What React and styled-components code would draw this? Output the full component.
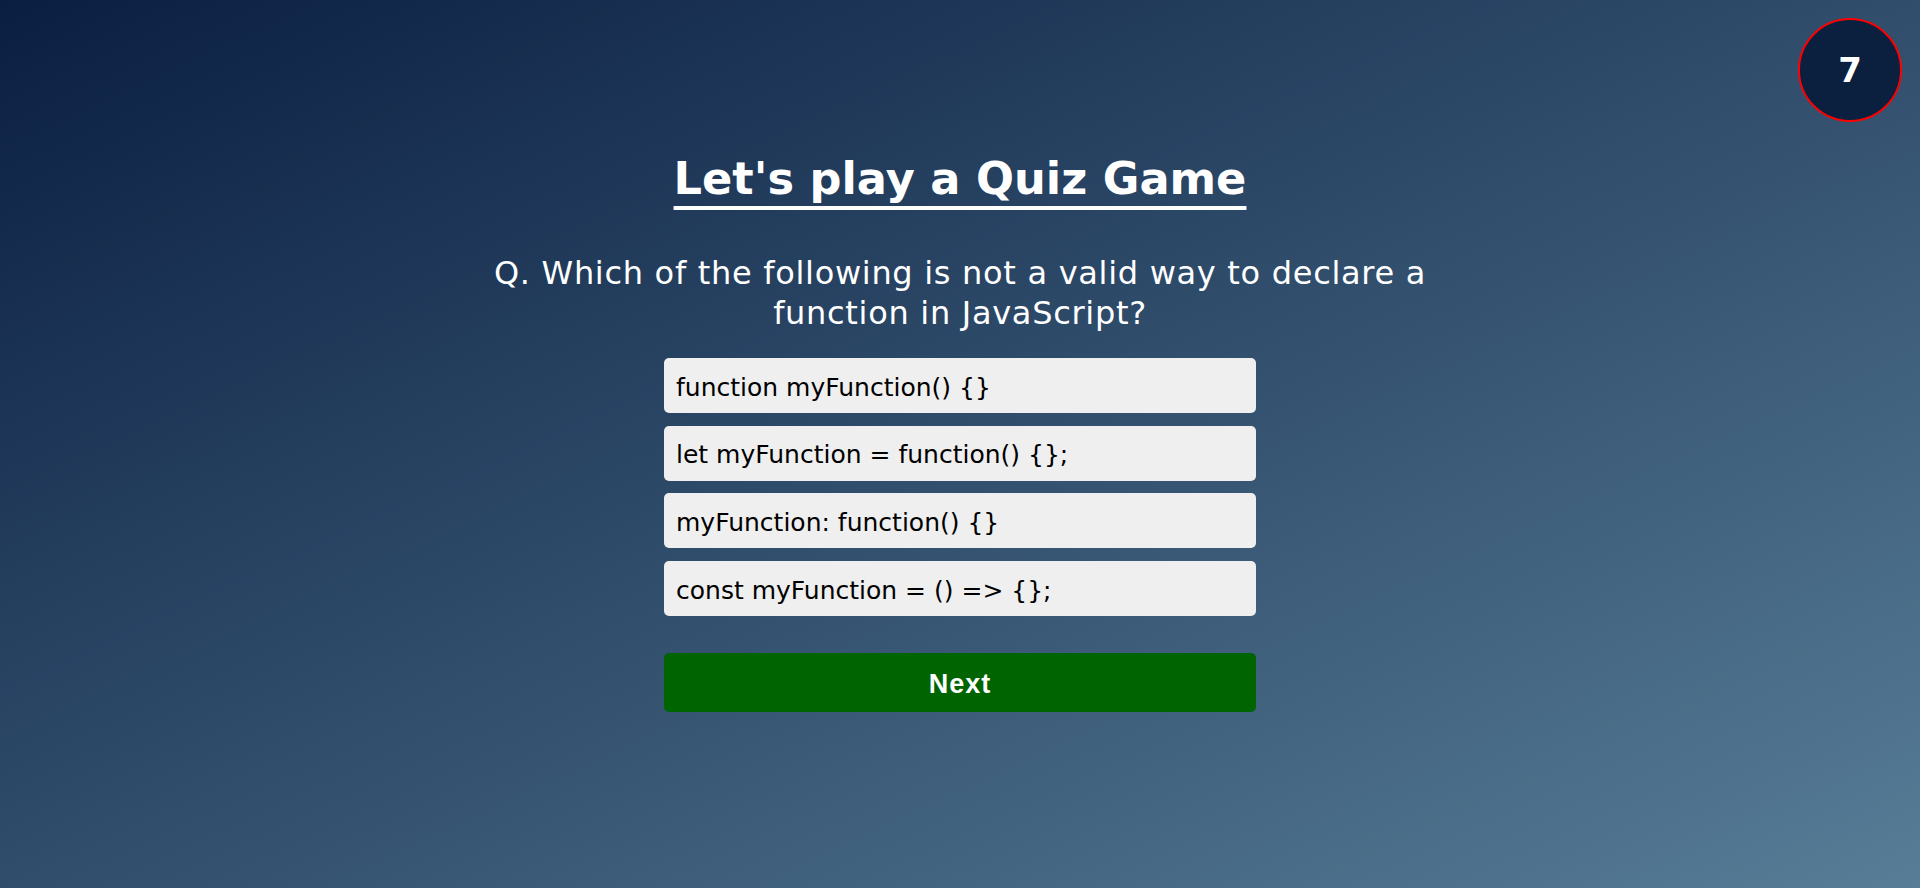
import React from 'react';
import styled, { createGlobalStyle } from 'styled-components';

const GlobalStyle = createGlobalStyle`
    html, body {
        margin: 0;
        padding: 0;
    }
    body {
        font-family: "DejaVu Sans", Verdana, sans-serif;
        background: linear-gradient(to bottom right, #0a1e41, #577d97);
        min-height: 888px;
        overflow: hidden;
    }
`;

const Page = styled.div`
    position: relative;
    height: 888px;
    display: flex;
    flex-direction: column;
    align-items: center;
    padding-top: 153px;
    box-sizing: border-box;
`;

const Timer = styled.div`
    position: absolute;
    top: 18px;
    right: 18px;
    width: 100px;
    height: 100px;
    border: 2px solid #f00;
    border-radius: 50%;
    background: #0b1f3f;
    color: #fff;
    display: flex;
    align-items: center;
    justify-content: center;
    font-weight: bold;
    font-size: 34px;
`;

const Title = styled.h1`
    margin: 0;
    color: #fff;
    font-size: 44.7px;
    font-weight: bold;
    text-decoration: underline;
    text-decoration-thickness: 4px;
    text-underline-offset: 12px;
`;

const Question = styled.p`
    margin: 48px 0 25px;
    max-width: 1000px;
    text-align: center;
    color: #fff;
    font-size: 32px;
    letter-spacing: 0.7px;
    line-height: 40px;
`;

const Options = styled.div`
    width: 592px;
    display: flex;
    flex-direction: column;
    gap: 12.7px;
`;

const Option = styled.button`
    height: 55px;
    padding: 3px 12px 0;
    border: none;
    border-radius: 5px;
    background: #efefef;
    color: #000;
    text-align: left;
    font-size: 25px;
    font-family: "DejaVu Sans", Verdana, sans-serif;
    cursor: pointer;
`;

const NextButton = styled.button`
    margin-top: 37px;
    width: 592px;
    height: 59px;
    padding-top: 4px;
    border: none;
    border-radius: 5px;
    background: #006400;
    color: #fff;
    font-family: "Liberation Sans", Arial, sans-serif;
    font-weight: bold;
    font-size: 27px;
    letter-spacing: 1px;
    cursor: pointer;
`;

const options = [
    'function myFunction() {}',
    'let myFunction = function() {};',
    'myFunction: function() {}',
    'const myFunction = () => {};',
];

const App = () => {
    return (
        <>
            <GlobalStyle />
            <Page>
                <Timer>7</Timer>
                <Title>Let's play a Quiz Game</Title>
                <Question>
                    Q. Which of the following is not a valid way to declare a function in JavaScript?
                </Question>
                <Options>
                    {options.map((text) => (
                        <Option key={text}>{text}</Option>
                    ))}
                </Options>
                <NextButton>Next</NextButton>
            </Page>
        </>
    );
};

export default App;
